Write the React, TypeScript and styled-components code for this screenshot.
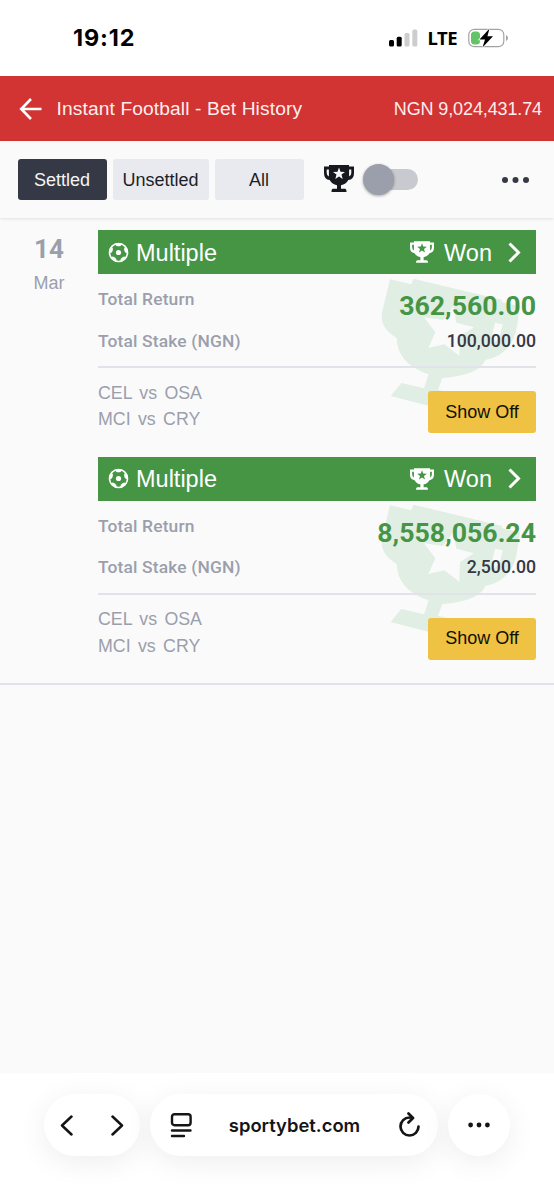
import React from "react";
import styled, { createGlobalStyle } from "styled-components";

const GlobalStyle = createGlobalStyle`
  *, *::before, *::after { box-sizing: border-box; }
  body { margin: 0; background: #fff; font-family: "Liberation Sans", Arial, sans-serif; }
  svg { display: block; flex: none; }
`;

const Screen = styled.div`
  width: 554px;
  height: 1200px;
  display: flex;
  flex-direction: column;
  overflow: hidden;
  background: #fff;
`;

const StatusBar = styled.div`
  height: 76px;
  flex: none;
  display: flex;
  align-items: center;
  padding: 0 45px 0 73px;
  color: #000;
`;

const Clock = styled.span`
  flex: 1;
  font: 700 23.4px/28px Inter, sans-serif;
  letter-spacing: 0.9px;
`;

const Network = styled.span`
  font: 700 18.5px/24px "Noto Sans", sans-serif;
  letter-spacing: -0.5px;
  margin: 0 11px 1px 9px;
`;

const Header = styled.header`
  height: 65px;
  flex: none;
  display: flex;
  align-items: center;
  padding: 0 12px 0 19px;
  background: #d23333;
  color: #fdeeee;
`;

const Title = styled.h1`
  flex: 1;
  margin: 0 0 0 14.5px;
  font-size: 19.2px;
  font-weight: 400;
  line-height: 24px;
  letter-spacing: 0.12px;
`;

const Balance = styled.span`
  font-size: 18px;
  line-height: 24px;
  letter-spacing: -0.12px;
  white-space: nowrap;
`;

const Toolbar = styled.div`
  height: 77px;
  flex: none;
  display: flex;
  align-items: center;
  padding: 0 24px 1px 17.5px;
  background: #fafafb;
  box-shadow: 0 1px 3px rgba(0, 0, 0, 0.1);
  position: relative;
`;

const Tab = styled.button<{ $active?: boolean; $width: number }>`
  width: ${(p) => p.$width}px;
  height: 41px;
  margin: 0 6px 0 0;
  padding: 0;
  border: 0;
  border-radius: 3px;
  font: 400 18px/42px "Liberation Sans", Arial, sans-serif;
  background: ${(p) => (p.$active ? "#353945" : "#e9eaef")};
  color: ${(p) => (p.$active ? "#f4f4f6" : "#1d1f28")};
`;

const TrophySlot = styled.span`
  margin: 0 14px 1px 14px;
  color: #17191f;
`;

const Switch = styled.span`
  width: 50px;
  height: 21px;
  border-radius: 11px;
  background: #c9cad0;
  display: flex;
  align-items: center;
`;

const Knob = styled.span`
  width: 31px;
  height: 31px;
  flex: none;
  margin-left: -5px;
  border-radius: 50%;
  background: #9b9fab;
  box-shadow: 0 1px 3px rgba(0, 0, 0, 0.35);
`;

const Spacer = styled.span`
  flex: 1;
`;

const MenuDots = styled.span`
  padding-top: 1px;
  color: #353945;
`;

const Content = styled.main`
  flex: none;
  height: 855px;
  background: #fafafb;
`;

const DayGroup = styled.section`
  display: flex;
  height: 466.5px;
  padding: 12px 18px 0 0;
  border-bottom: 2px solid #e2e3ea;
`;

const DateColumn = styled.div`
  width: 98px;
  text-align: center;
  color: #9b9fab;
`;

const Day = styled.div`
  margin-top: 3px;
  font: 700 26px/32px Roboto, sans-serif;
`;

const Month = styled.div`
  margin-top: 7px;
  font-size: 18px;
  line-height: 22px;
`;

const Bets = styled.div`
  width: 438px;
`;

const Card = styled.article`
  position: relative;
  isolation: isolate;
  height: 226.5px;
`;

const CardHead = styled.div`
  height: 44px;
  display: flex;
  align-items: center;
  padding: 0 15px 0 10px;
  background: #459545;
  color: #fff;
  font-size: 23.5px;
  line-height: 30px;
`;

const BetType = styled.span`
  flex: 1;
  padding: 1px 0 0 7px;
`;

const Result = styled.span`
  padding-top: 1px;
  margin: 0 16px 0 10px;
`;

const Watermark = styled.svg`
  position: absolute;
  z-index: -1;
  left: 276px;
  top: 43.5px;
`;

const AmountRow = styled.div<{ $height: number }>`
  display: flex;
  justify-content: space-between;
  height: ${(p) => p.$height}px;
`;

const Label = styled.span`
  font: 500 17.4px/22px Roboto, sans-serif;
  letter-spacing: 0.15px;
  color: #9b9fab;
`;

const Return = styled.span`
  padding-top: 2px;
  font: 700 26.7px/32px Roboto, sans-serif;
  color: #459545;
`;

const Stake = styled.span`
  font: 500 17.7px/22px Roboto, sans-serif;
  color: #353945;
`;

const Details = styled.div`
  padding-top: 14px;
`;

const CardFoot = styled.div`
  height: 74px;
  display: flex;
  justify-content: space-between;
  border-top: 2px solid #e2e3ea;
`;

const Matches = styled.div`
  padding-top: 11.5px;
  font-size: 17.8px;
  line-height: 26.5px;
  word-spacing: 2.4px;
  color: #9b9fab;
`;

const ShowOff = styled.button`
  width: 108px;
  height: 42px;
  margin: 23px 0 0;
  padding: 0;
  border: 0;
  border-radius: 3px;
  background: #f0c244;
  color: #120f05;
  font: 400 18px/41px "Liberation Sans", Arial, sans-serif;
`;

const BrowserBar = styled.nav`
  flex: 1;
  display: flex;
  align-items: flex-start;
  justify-content: center;
  gap: 10px;
  padding-top: 21px;
  background: #fff;
`;

const Pill = styled.div<{ $width: number; $pad?: string }>`
  width: ${(p) => p.$width}px;
  height: 62px;
  flex: none;
  display: flex;
  align-items: center;
  justify-content: space-between;
  padding: ${(p) => p.$pad ?? "0"};
  border-radius: 31px;
  background: #fff;
  box-shadow: 0 6px 30px rgba(0, 0, 0, 0.07);
  color: #151517;
`;

const Address = styled.span`
  font: 600 18.4px/24px Inter, sans-serif;
  margin-right: 2px;
`;

function Trophy({ width, height }: { width: number; height: number }) {
  return (
    <svg width={width} height={height} viewBox="0 0 30 27">
      <path
        fill="currentColor"
        fillRule="evenodd"
        d="M5 0H25V1.500H30V8Q30 14.500 24.300 15Q22 19.300 17 20.200V23.700H21Q22.500 23.700 22.500 27H7.500Q7.500 23.700 9 23.700H13V20.200Q8 19.300 5.700 15Q0 14.500 0 8V1.500H5ZM2.700 4.500V8Q2.700 10.800 4.900 11.500V4.500ZM27.300 4.500H25.100V11.500Q27.300 10.800 27.300 8ZM15 2.500L16.500 6.700L21 6.900L17.500 9.600L18.700 14L15 11.500L11.300 14L12.500 9.600L9 6.900L13.500 6.700Z"
      />
    </svg>
  );
}

function Ball() {
  return (
    <svg width="21" height="21" viewBox="0 0 21 21" fill="none">
      <circle cx="10.500" cy="10.500" r="9" stroke="#fff" strokeWidth="1.600" />
      <circle cx="10.500" cy="10.500" r="2.600" fill="#fff" />
      <g fill="#fff">
        {[0, 72, 144, 216, 288].map((angle) => (
          <path key={angle} d="M6.600 1.500H14.400L12.600 4Q10.500 4.700 8.400 4Z" transform={`rotate(${angle} 10.500 10.500)`} />
        ))}
      </g>
    </svg>
  );
}

function Dots({ width, radius, gap }: { width: number; radius: number; gap: number }) {
  return (
    <svg width={width} height="8" viewBox={`0 0 ${width} 8`} fill="currentColor">
      {[-1, 0, 1].map((i) => (
        <circle key={i} cx={width / 2 + i * gap} cy="4" r={radius} />
      ))}
    </svg>
  );
}

function BetCard({ total, stake }: { total: string; stake: string }) {
  return (
    <Card>
      <CardHead>
        <Ball />
        <BetType>Multiple</BetType>
        <Trophy width={24} height={22} />
        <Result>Won</Result>
        <svg width="13" height="21" viewBox="0 0 13 21" fill="none" stroke="#fff" strokeWidth="3">
          <path d="M1.500 1.500L10.500 10.500L1.500 19.500" />
        </svg>
      </CardHead>
      <Watermark width="170" height="140" viewBox="0 0 510 420">
        <path
          fill="#e0eee3"
          fillRule="evenodd"
          d="M48 16L112 31L118 14L385 78L382 84L438 97L429 155Q415 243 334 258Q315 304 205 312L192 347L265 365Q280 369 278 405L244 416L50 366L82 327L150 343L164 301Q70 270 68 192Q14 160 25 112ZM363 146L349 207Q372 207 380 178L386 151ZM238 97L247 146L300 160L258 186L256 245L211 211L163 222L184 175L150 130L207 138Z"
        />
      </Watermark>
      <Details>
        <AmountRow $height={41.5}>
          <Label>Total Return</Label>
          <Return>{total}</Return>
        </AmountRow>
        <AmountRow $height={36.5}>
          <Label>Total Stake (NGN)</Label>
          <Stake>{stake}</Stake>
        </AmountRow>
      </Details>
      <CardFoot>
        <Matches>
          <div>CEL vs OSA</div>
          <div>MCI vs CRY</div>
        </Matches>
        <ShowOff>Show Off</ShowOff>
      </CardFoot>
    </Card>
  );
}

export default function App() {
  return (
    <Screen>
      <GlobalStyle />
      <StatusBar>
        <Clock>19:12</Clock>
        <svg width="29" height="18" viewBox="0 0 29 18">
          <rect x="0" y="11" width="5" height="6.500" rx="1.500" />
          <rect x="7.700" y="7.700" width="5" height="9.800" rx="1.500" />
          <rect x="15.500" y="4" width="5" height="13.500" rx="1.500" fill="#cdcdcd" />
          <rect x="23.300" y="0.500" width="5" height="17" rx="1.500" fill="#cdcdcd" />
        </svg>
        <Network>LTE</Network>
        <svg width="41" height="20" viewBox="0 0 41 20">
          <rect x="0.800" y="1.300" width="35" height="17.400" rx="5.500" fill="#fff" stroke="#a3a3a3" strokeWidth="1.200" />
          <path d="M38 7Q40 8 40 10Q40 12 38 13Z" fill="#a3a3a3" />
          <rect x="3" y="3.500" width="9" height="13" rx="3.500" fill="#62c466" />
          <path d="M21.500 0.500L11.500 11.500H17L14.500 19.500L25 8.300H19.400Z" stroke="#fff" strokeWidth="1.500" paintOrder="stroke" />
        </svg>
      </StatusBar>
      <Header>
        <svg width="23" height="22" viewBox="0 0 23 22" fill="none" stroke="#fff" strokeWidth="2.600">
          <path d="M12 1L2.200 11L12 21M2 11H22.500" />
        </svg>
        <Title>Instant Football - Bet History</Title>
        <Balance>NGN 9,024,431.74</Balance>
      </Header>
      <Toolbar>
        <Tab $active $width={89}>Settled</Tab>
        <Tab $width={96}>Unsettled</Tab>
        <Tab $width={89}>All</Tab>
        <TrophySlot>
          <Trophy width={30} height={27} />
        </TrophySlot>
        <Switch>
          <Knob />
        </Switch>
        <Spacer />
        <MenuDots>
          <Dots width={29} radius={3} gap={10.5} />
        </MenuDots>
      </Toolbar>
      <Content>
        <DayGroup>
          <DateColumn>
            <Day>14</Day>
            <Month>Mar</Month>
          </DateColumn>
          <Bets>
            <BetCard total="362,560.00" stake="100,000.00" />
            <BetCard total="8,558,056.24" stake="2,500.00" />
          </Bets>
        </DayGroup>
      </Content>
      <BrowserBar>
        <Pill $width={96} $pad="0 16px">
          <svg width="13" height="21" viewBox="0 0 13 21" fill="none" stroke="currentColor" strokeWidth="2.500" strokeLinecap="round" strokeLinejoin="round">
            <path d="M11.500 1.500L2 10.500L11.500 19.500" />
          </svg>
          <svg width="13" height="21" viewBox="0 0 13 21" fill="none" stroke="currentColor" strokeWidth="2.500" strokeLinecap="round" strokeLinejoin="round">
            <path d="M1.500 1.500L11 10.500L1.500 19.500" />
          </svg>
        </Pill>
        <Pill $width={288} $pad="0 17px 0 20px">
          <svg width="23" height="26" viewBox="0 0 23 26" fill="none" stroke="currentColor" strokeWidth="2.400" strokeLinecap="round">
            <rect x="2" y="2.200" width="18.600" height="11" rx="2.500" />
            <path d="M2 18.500H20.500M2 24H14" />
          </svg>
          <Address>sportybet.com</Address>
          <svg width="23" height="26" viewBox="0 0 23 26" fill="none" stroke="currentColor" strokeWidth="2.700" strokeLinecap="round" strokeLinejoin="round">
            <path d="M14.500 6Q13 5.500 11.500 5.500A9 9 0 1 0 20.500 14.500M10.500 1.500L15 6L10.500 10.500" />
          </svg>
        </Pill>
        <Pill $width={62} $pad="0 19px">
          <Dots width={24} radius={2.4} gap={8.4} />
        </Pill>
      </BrowserBar>
    </Screen>
  );
}
